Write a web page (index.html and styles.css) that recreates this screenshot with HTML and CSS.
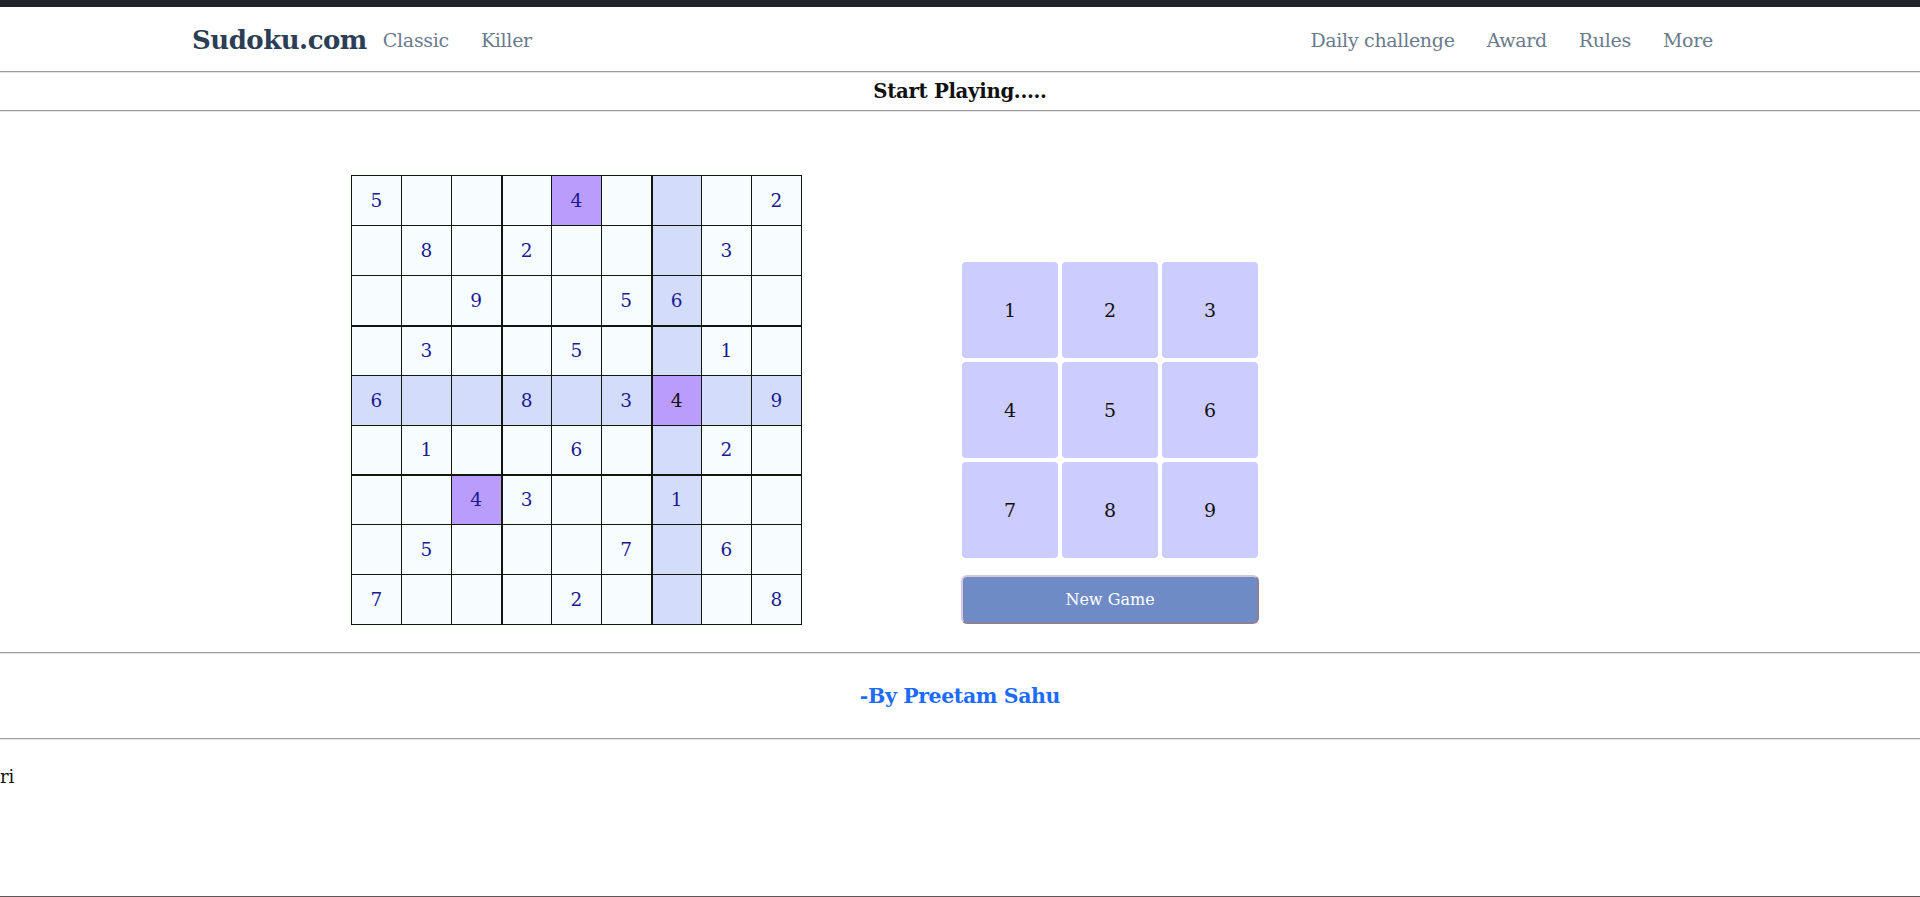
FILE: index.html
```html
<!DOCTYPE html>
<html lang="en">
<head>
<meta charset="utf-8">
<title>Sudoku.com</title>
<link rel="stylesheet" href="styles.css">
</head>
<body>
<div class="topbar"></div>
<nav class="navbar">
  <a class="brand" href="#">Sudoku.com</a>
  <ul class="nav nav-left">
    <li><a href="#">Classic</a></li>
    <li><a href="#">Killer</a></li>
  </ul>
  <ul class="nav nav-right">
    <li><a href="#">Daily challenge</a></li>
    <li><a href="#">Award</a></li>
    <li><a href="#">Rules</a></li>
    <li><a href="#">More</a></li>
  </ul>
</nav>
<div class="rule"></div>
<h2 class="title">Start Playing.....</h2>
<div class="rule"></div>
<main class="board-area">
  <table class="sudoku">
    <tr><td>5</td><td></td><td></td><td></td><td class="same">4</td><td></td><td class="hl"></td><td></td><td>2</td></tr>
    <tr><td></td><td>8</td><td></td><td>2</td><td></td><td></td><td class="hl"></td><td>3</td><td></td></tr>
    <tr class="box-end"><td></td><td></td><td>9</td><td></td><td></td><td>5</td><td class="hl">6</td><td></td><td></td></tr>
    <tr><td></td><td>3</td><td></td><td></td><td>5</td><td></td><td class="hl"></td><td>1</td><td></td></tr>
    <tr class="hl-row"><td>6</td><td></td><td></td><td>8</td><td></td><td>3</td><td class="sel">4</td><td></td><td>9</td></tr>
    <tr class="box-end short"><td></td><td>1</td><td></td><td></td><td>6</td><td></td><td class="hl"></td><td>2</td><td></td></tr>
    <tr><td></td><td></td><td class="same">4</td><td>3</td><td></td><td></td><td class="hl">1</td><td></td><td></td></tr>
    <tr><td></td><td>5</td><td></td><td></td><td></td><td>7</td><td class="hl"></td><td>6</td><td></td></tr>
    <tr><td>7</td><td></td><td></td><td></td><td>2</td><td></td><td class="hl"></td><td></td><td>8</td></tr>
  </table>
  <div class="controls">
    <div class="pad">
      <button class="key">1</button><button class="key">2</button><button class="key">3</button>
      <button class="key">4</button><button class="key">5</button><button class="key">6</button>
      <button class="key">7</button><button class="key">8</button><button class="key">9</button>
    </div>
    <button class="new-game">New Game</button>
  </div>
</main>
<div class="rule"></div>
<footer class="credit">-By Preetam Sahu</footer>
<div class="rule"></div>
<section class="extra">
  <p class="stray">ri</p>
</section>
<div class="bottom-line"></div>
</body>
</html>
```

FILE: styles.css
```css
* { box-sizing: border-box; }
html, body { margin: 0; padding: 0; }
body {
  font-family: "DejaVu Serif", "Liberation Serif", serif;
  color: #212529;
  background: #ffffff;
  overflow: hidden;
}
.topbar {
  height: 7px;
  background: #21252b;
}
.navbar {
  display: flex;
  align-items: center;
  height: 64px;
  padding: 2px 207px 0 192px;
}
.brand {
  font-weight: bold;
  font-size: 26px;
  letter-spacing: -0.5px;
  color: #2c3e55;
  text-decoration: none;
}
.nav {
  display: flex;
  list-style: none;
  margin: 0;
  padding: 0;
}
.nav-right { margin-left: auto; }
.nav li a {
  display: block;
  padding: 0 16px;
  font-size: 19px;
  color: #6a7b8d;
  text-decoration: none;
  letter-spacing: -0.3px;
}
.nav-right li:last-child a { padding-right: 0; }
.rule {
  height: 2px;
  border-top: 1px solid #9c9c9c;
  border-bottom: 1px solid #e6e6e6;
}
.title {
  margin: 0;
  height: 37px;
  line-height: 37px;
  text-align: center;
  font-size: 19.7px;
  font-weight: bold;
  color: #111111;
  letter-spacing: -0.3px;
}
.board-area {
  display: flex;
  align-items: flex-end;
  gap: 160px;
  padding: 63px 0 27px 351px;
}
.sudoku {
  border-collapse: collapse;
  border: 1px solid #0e180e;
}
.sudoku td {
  width: 50px;
  height: 50px;
  padding: 0;
  border: 1px solid #0e180e;
  background: #f7fcff;
  text-align: center;
  vertical-align: middle;
  font-size: 18.5px;
  color: #1a1a92;
}
.sudoku tr.short td { height: 49px; }
.sudoku td:nth-child(3),
.sudoku td:nth-child(6) { border-right: 2px solid #0e180e; }
.sudoku tr.box-end td { border-bottom: 2px solid #0e180e; }
.sudoku td.hl,
.sudoku tr.hl-row td { background: #d4dcfc; }
.sudoku td.same { background: #b99cfb; }
.sudoku tr.hl-row td.sel {
  background: #b99cfb;
  color: #111111;
}
.controls {
  display: flex;
  flex-direction: column;
  gap: 17px;
  margin-bottom: 1px;
}
.pad {
  display: grid;
  grid-template-columns: repeat(3, 96px);
  grid-auto-rows: 96px;
  gap: 4px;
}
.key {
  border: none;
  border-radius: 4px;
  background: #ccccff;
  font-family: inherit;
  font-size: 19px;
  color: #111111;
  padding: 0;
}
.new-game {
  width: 298px;
  height: 49px;
  margin-left: -1px;
  border: 2px solid #b9a9c4;
  border-color: #d6c8dc #8c8095 #8c8095 #d6c8dc;
  border-radius: 6px;
  background: #6f8bc6;
  color: #ffffff;
  font-family: inherit;
  font-size: 16px;
}
.credit {
  height: 84px;
  line-height: 84px;
  text-align: center;
  font-size: 20.5px;
  font-weight: bold;
  color: #1d6bfd;
  letter-spacing: -0.4px;
}
.extra {
  height: 156px;
  padding-top: 25px;
}
.stray {
  margin: 0;
  font-size: 18px;
  line-height: 24px;
  color: #111111;
}
.bottom-line {
  height: 2px;
  background: #5f5656;
}
```
